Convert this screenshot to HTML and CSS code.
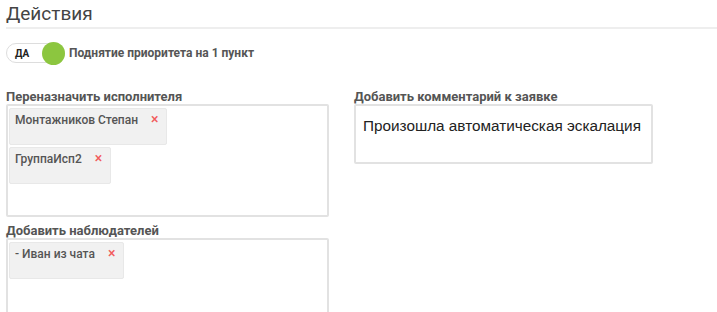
FILE: index.html
```html
<!DOCTYPE html>
<html>
  <head>
    <meta charset="UTF-8">
    <title>Действия</title>
    <link rel="stylesheet" href="styles.css">
  </head>
  <body>
    <div id="actions">
      <h2 class="title">Действия</h2>

      <div class="switch-row">
        <span class="switch"><span class="switch-text">ДА</span><span class="knob"></span></span>
        <span class="switch-label">Поднятие приоритета на 1 пункт</span>
      </div>

      <div class="columns">
        <div class="col-left">
          <div class="field">
            <label class="field-label">Переназначить исполнителя</label>
            <div class="tags tags-tall">
              <span class="tag">Монтажников Степан <span class="remove">&#215;</span></span>
              <span class="tag">ГруппаИсп2 <span class="remove">&#215;</span></span>
            </div>
          </div>
          <div class="field">
            <label class="field-label">Добавить наблюдателей</label>
            <div class="tags tags-short">
              <span class="tag">- Иван из чата <span class="remove">&#215;</span></span>
            </div>
          </div>
        </div>
        <div class="col-right">
          <div class="field">
            <label class="field-label">Добавить комментарий к заявке</label>
            <div class="comment">Произошла автоматическая эскалация</div>
          </div>
        </div>
      </div>
    </div>
  </body>
</html>
```

FILE: styles.css
```css
html, body { height: 312px; overflow: hidden; }
body { margin: 0; padding: 0 0 0 6px; background: #fff; font-family: Roboto, "Liberation Sans", sans-serif; color: #555; }
.title { font-size: 19px; font-weight: 400; color: #444; margin: 0; padding: 4px 0 3px 0; border-bottom: 2px solid #eeeeee; line-height: 20px; }

.switch-row { display: flex; align-items: center; margin-top: 12px; height: 24px; }
.switch { position: relative; display: inline-flex; align-items: center; width: 59px; height: 20px; border: 1px solid #ddd; border-radius: 11px; box-sizing: border-box; background: #fff; }
.switch-text { font-size: 10px; font-weight: 700; color: #222; padding-left: 8px; }
.knob { position: absolute; right: -1px; top: -2px; width: 23px; height: 23px; border-radius: 50%; background: #8cc63f; }
.switch-label { font-size: 12px; font-weight: 700; color: #555; margin-left: 4px; }

.columns { display: flex; gap: 25px; margin-top: 24px; }
.col-left { width: 323px; }
.col-right { width: 299px; }
.field { margin-bottom: 6px; }
.field-label { display: block; font-size: 13px; font-weight: 700; color: #555; line-height: 15px; margin-bottom: 0; }

.tags { border: 2px solid #e2e2e2; border-radius: 2px; padding: 2px 2px 2px 1px; display: flex; flex-direction: column; align-items: flex-start; gap: 2px; }
.tags-tall { height: 113px; box-sizing: border-box; }
.tags-short { height: 80px; box-sizing: border-box; }
.tag { background: #f1f1f1; border: 1px solid #e8e8e8; border-radius: 2px; height: 37px; box-sizing: border-box; padding: 2px 8px 0 5px; font-size: 12px; font-weight: 500; color: #555; }
.remove { color: #f25c5c; font-size: 14px; margin-left: 10px; }

.comment { border: 2px solid #e2e2e2; border-radius: 2px; height: 60px; box-sizing: border-box; padding: 11px 7px; font-family: "Liberation Sans", Arial, sans-serif; font-size: 15.3px; color: #222; }
```
